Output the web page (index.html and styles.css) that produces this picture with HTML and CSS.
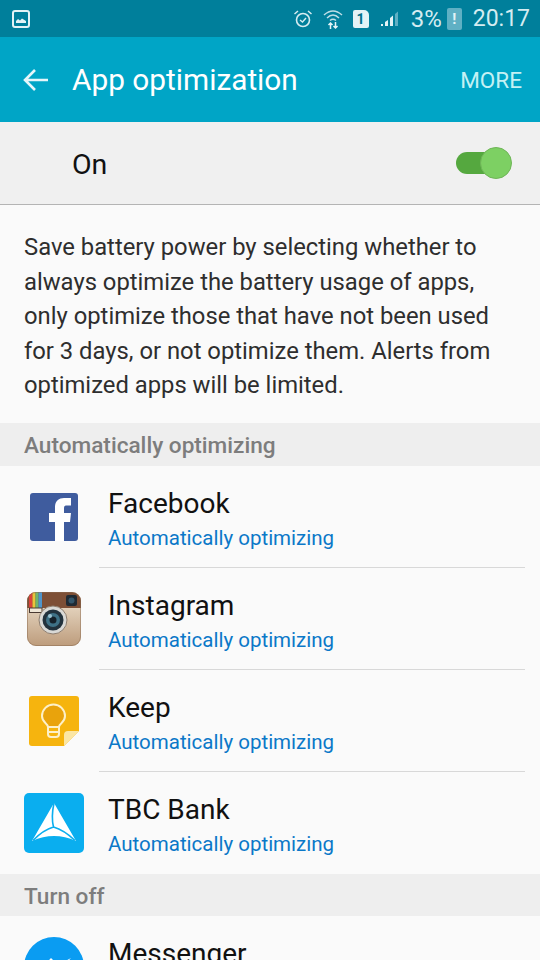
FILE: index.html
```html
<!DOCTYPE html>
<html lang="en">
<head>
    <meta charset="UTF-8">
    <meta name="viewport" content="width=device-width, initial-scale=1.0">
    <title>App optimization</title>
    <link rel="stylesheet" href="styles.css">
</head>
<body>
    <div class="statusbar">
        <svg class="st-gallery" width="18" height="18" viewBox="0 0 18 18">
            <rect x="1" y="1" width="16" height="16" rx="2" fill="none" stroke="#e3f3f6" stroke-width="2"/>
            <path d="M4 13 L4 11 L6 9 L8 10.500 L10 8.500 L14 11 L14 13 Z" fill="#e3f3f6"/>
        </svg>
        <div class="st-right">
            <svg width="20" height="20" viewBox="0 0 20 20" fill="none" stroke="#d5ecf1">
                <circle cx="10" cy="11" r="6.500" stroke-width="1.600"/>
                <path d="M7 11 L9.500 13 L13 9" stroke-width="1.400"/>
                <path d="M1.500 5 L5 2 M18.500 5 L15 2" stroke-width="1.500"/>
            </svg>
            <svg class="st-wifi" width="20" height="22" viewBox="0 0 20 22" fill="none" stroke="#bfdfe7">
                <path d="M1 7 Q10 -1 19 7" stroke-width="1.500"/>
                <path d="M4 10 Q10 4 16 10" stroke-width="1.500"/>
                <path d="M7 12.500 Q10 10 13 12.500" stroke-width="1.500"/>
                <path d="M7.500 21 V15 M5.500 17 L7.500 15 L9.500 17 M12.500 14 V20 M10.500 18 L12.500 20 L14.500 18" stroke="#e3f3f6" stroke-width="1.500"/>
            </svg>
            <div class="st-sim">1</div>
            <svg class="st-signal" width="20" height="20" viewBox="0 0 20 20">
                <rect x="1" y="15" width="2" height="2" fill="#e3f3f6"/>
                <path d="M5 17 V13 L8 11 V17 Z" fill="#e3f3f6"/>
                <path d="M10 17 V9 L13 6.500 V17 Z" fill="#e3f3f6"/>
                <path d="M15 17 V5 L18 2.500 V17 Z" fill="#5fb0c4"/>
            </svg>
            <span class="st-pct">3%</span>
            <div class="st-batt"><span>!</span></div>
            <span class="st-time">20:17</span>
        </div>
    </div>

    <div class="appbar">
        <svg class="back" width="26" height="24" viewBox="0 0 26 24" fill="none" stroke="#e6f6fa" stroke-width="2.600">
            <path d="M25 12 H2 M12 2 L2 12 L12 22"/>
        </svg>
        <div class="appbar-title">App optimization</div>
        <div class="appbar-more">MORE</div>
    </div>

    <div class="master">
        <span class="master-label">On</span>
        <div class="switch"><div class="switch-knob"></div></div>
    </div>

    <p class="desc">Save battery power by selecting whether to always optimize the battery usage of apps, only optimize those that have not been used for 3 days, or not optimize them. Alerts from optimized apps will be limited.</p>

    <div class="section">Automatically optimizing</div>

    <div class="row">
        <div class="row-icon">
            <svg width="48" height="48" viewBox="0 0 48 48">
                <rect width="48" height="48" rx="3" fill="#3f5c9e"/>
                <path d="M25 48 V29 H19 V20 H25 V14 C25 8 29 5 34 5 H41 V12.500 H36 C34.500 12.500 34 13.500 34 15.500 V20 H41 L40 29 H34 V48 Z" fill="#fff"/>
            </svg>
        </div>
        <div class="row-body">
            <div class="row-name">Facebook</div>
            <div class="row-sub">Automatically optimizing</div>
        </div>
    </div>

    <div class="row">
        <div class="row-icon">
            <svg width="54" height="54" viewBox="0 0 54 54">
                <defs>
                    <linearGradient id="ig-body" x1="0" y1="0" x2="0" y2="1">
                        <stop offset="0" stop-color="#f1e6d4"/>
                        <stop offset="1" stop-color="#bd9c7c"/>
                    </linearGradient>
                    <clipPath id="ig-clip"><rect width="54" height="54" rx="9"/></clipPath>
                </defs>
                <g clip-path="url(#ig-clip)">
                    <rect width="54" height="54" fill="url(#ig-body)"/>
                    <rect width="54" height="16" fill="#7d4f36"/>
                    <rect x="2" y="0" width="3.500" height="16" fill="#d9423a"/>
                    <rect x="5.500" y="0" width="3" height="16" fill="#e8c53a"/>
                    <rect x="8.500" y="0" width="3" height="16" fill="#6fb56a"/>
                    <rect x="11.500" y="0" width="3.500" height="16" fill="#4f94c9"/>
                    <rect x="2.500" y="16" width="12.500" height="4.500" fill="#efe6d6" stroke="#4a3a32" stroke-width="1"/>
                </g>
                <rect x="0.500" y="0.500" width="53" height="53" rx="8.500" fill="none" stroke="#8a6a50" stroke-opacity="0.500"/>
                <rect x="39" y="3" width="11" height="11" rx="2" fill="#1f2a33"/>
                <circle cx="44.500" cy="8.500" r="3" fill="#33566b"/>
                <circle cx="26" cy="28" r="14" fill="#d9d9d6" stroke="#8f7f70" stroke-width="1"/>
                <circle cx="26" cy="28" r="10.500" fill="#22323d"/>
                <circle cx="26" cy="28" r="7" fill="#3e7186"/>
                <circle cx="26" cy="28" r="3.500" fill="#16222b"/>
                <circle cx="23" cy="24" r="2" fill="#9cc3d2"/>
            </svg>
        </div>
        <div class="row-body">
            <div class="row-name">Instagram</div>
            <div class="row-sub">Automatically optimizing</div>
        </div>
    </div>

    <div class="row">
        <div class="row-icon">
            <svg width="50" height="50" viewBox="0 0 50 50">
                <path d="M3 0 H47 A3 3 0 0 1 50 3 V35 L35 50 H3 A3 3 0 0 1 0 47 V3 A3 3 0 0 1 3 0 Z" fill="#f6b40e"/>
                <path d="M35 50 V39 A4 4 0 0 1 39 35 H50 Z" fill="#fbe6a4"/>
                <path d="M19 31 C19 27 13 27 13 20 A11.500 11.500 0 0 1 36 20 C36 27 30 27 30 31 Z" fill="#e9a30c" stroke="#fdf0c8" stroke-width="2"/>
                <path d="M19 31 H30 V38 Q30 41 27 41 H22 Q19 41 19 38 Z M19 36 H30" fill="none" stroke="#fdf0c8" stroke-width="2"/>
            </svg>
        </div>
        <div class="row-body">
            <div class="row-name">Keep</div>
            <div class="row-sub">Automatically optimizing</div>
        </div>
    </div>

    <div class="row row-last">
        <div class="row-icon">
            <svg width="60" height="60" viewBox="0 0 60 60">
                <rect width="60" height="60" rx="5" fill="#0aaeef"/>
                <path d="M30 10 L52 48 Q30 38 8 48 Z" fill="#fff"/>
                <path d="M30 10 Q27 24 29.500 34 M29.500 34 Q19 37 9 47.500 M29.500 34 Q40 37 51 47.500" fill="none" stroke="#0aaeef" stroke-width="1.600"/>
            </svg>
        </div>
        <div class="row-body">
            <div class="row-name">TBC Bank</div>
            <div class="row-sub">Automatically optimizing</div>
        </div>
    </div>

    <div class="section section-off">Turn off</div>

    <div class="row row-last">
        <div class="row-icon">
            <svg width="60" height="60" viewBox="0 0 60 60">
                <circle cx="30" cy="30" r="30" fill="#0a9cf2"/>
                <path d="M13 36 L27 21 L34 28 L47 21 L33 36 L26 29 Z" fill="#fff"/>
            </svg>
        </div>
        <div class="row-body">
            <div class="row-name">Messenger</div>
        </div>
    </div>
</body>
</html>
```

FILE: styles.css
```css
* {
    box-sizing: border-box;
}
html, body {
    height: 960px;
    overflow: hidden;
}
body {
    margin: 0;
    font-family: Roboto, "Liberation Sans", sans-serif;
    background: #fafafa;
    color: #111;
}

.statusbar {
    height: 37px;
    background: #007f9b;
    display: flex;
    align-items: center;
    justify-content: space-between;
    padding: 0 10px 0 12px;
}
.st-right {
    display: flex;
    align-items: center;
    color: #d5ecf1;
}
.st-wifi {
    margin-left: 10px;
}
.st-sim {
    width: 16px;
    height: 18px;
    margin-left: 10px;
    background: #e3f3f6;
    color: #00708a;
    border-radius: 2px 5px 2px 2px;
    font-size: 14px;
    font-weight: 700;
    line-height: 18px;
    text-align: center;
}
.st-signal {
    margin-left: 11px;
}
.st-pct {
    margin-left: 11px;
    font-size: 24px;
}
.st-batt {
    width: 15px;
    height: 22px;
    margin-left: 5px;
    background: #5fb0c4;
    border-radius: 2px;
    color: #e3f3f6;
    font-size: 15px;
    font-weight: 700;
    line-height: 22px;
    text-align: center;
}
.st-time {
    margin-left: 11px;
    font-size: 23px;
}

.appbar {
    height: 85px;
    background: #00a5c6;
    display: flex;
    align-items: center;
    padding: 0 18px 0 23px;
    color: #fff;
}
.back {
    margin-right: 23px;
}
.appbar-title {
    flex: 1;
    font-size: 29.800px;
}
.appbar-more {
    font-size: 22.500px;
    color: #c4f1f4;
}

.master {
    height: 83px;
    background: #f0f0f0;
    border-bottom: 1px solid #b4b4b4;
    display: flex;
    align-items: center;
    justify-content: space-between;
    padding: 2px 33px 0 72px;
}
.master-label {
    font-size: 28.500px;
}
.switch {
    position: relative;
    width: 51px;
    height: 22px;
    margin-top: -2px;
    border-radius: 11px;
    background: #55a83f;
}
.switch-knob {
    position: absolute;
    right: -5px;
    top: -5px;
    width: 32px;
    height: 32px;
    border-radius: 50%;
    background: #7dd063;
    border: 1px solid #6fb558;
}

.desc {
    margin: 0;
    padding: 25px 24px 20px;
    font-size: 23.800px;
    line-height: 34.500px;
    color: #2e2e2e;
}

.section {
    height: 43px;
    background: #eeeeee;
    padding: 1px 0 0 24px;
    font-size: 22.600px;
    font-weight: 500;
    line-height: 43px;
    color: #7d7d7d;
}
.section-off {
    height: 42px;
}

.row {
    height: 102px;
    display: flex;
}
.row-icon {
    width: 60px;
    flex-shrink: 0;
    margin: 0 24px;
    display: flex;
    align-items: center;
    justify-content: center;
}
.row-body {
    flex: 1;
    margin: 0 15px 0 -9px;
    padding: 20px 0 0 9px;
    border-bottom: 1px solid #d8d8d8;
}
.row-last .row-body {
    border-bottom: 0;
}
.row-name {
    font-size: 28px;
    line-height: 36px;
    color: #111;
}
.row-sub {
    margin-top: 1px;
    font-size: 20.500px;
    line-height: 30px;
    color: #0b78c8;
}
```
